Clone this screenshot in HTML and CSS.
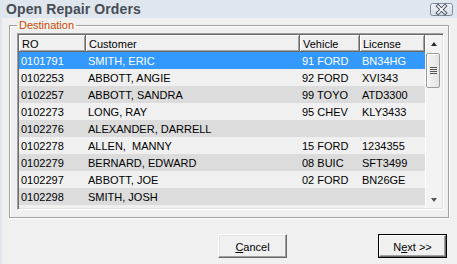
FILE: index.html
```html
<!DOCTYPE html>
<html>
<head>
<meta charset="utf-8">
<title>Open Repair Orders</title>
<link rel="stylesheet" href="styles.css">
</head>
<body>
<div class="window">
  <div class="titlebar">
    <span class="title">Open Repair Orders</span>
    <span class="close">
      <svg width="23" height="13" viewBox="0 0 23 13">
        <defs>
          <linearGradient id="cg" x1="0" y1="0" x2="0" y2="1">
            <stop offset="0" stop-color="#f1f4f8"/>
            <stop offset="1" stop-color="#d6dee8"/>
          </linearGradient>
        </defs>
        <rect x="0.5" y="0.5" width="22" height="12" rx="2" ry="2" fill="url(#cg)" stroke="#7f8a98"/>
        <path d="M8 3 L15 10 M15 3 L8 10" stroke="#4a5462" stroke-width="3.6" stroke-linecap="square"/>
        <path d="M8 3 L15 10 M15 3 L8 10" stroke="#ffffff" stroke-width="1.6" stroke-linecap="square"/>
      </svg>
    </span>
  </div>
  <div class="main">
    <fieldset class="group">
      <legend class="legend">Destination</legend>
      <div class="listview">
        <div class="table">
          <div class="hdr">
            <div class="th">RO</div>
            <div class="th">Customer</div>
            <div class="th">Vehicle</div>
            <div class="th">License</div>
          </div>
          <div class="row sel"><span>0101791</span><span>SMITH, ERIC</span><span>91 FORD</span><span>BN34HG</span></div>
          <div class="row light"><span>0102253</span><span>ABBOTT, ANGIE</span><span>92 FORD</span><span>XVI343</span></div>
          <div class="row dark"><span>0102257</span><span>ABBOTT, SANDRA</span><span>99 TOYO</span><span>ATD3300</span></div>
          <div class="row light"><span>0102273</span><span>LONG, RAY</span><span>95 CHEV</span><span>KLY3433</span></div>
          <div class="row dark"><span>0102276</span><span>ALEXANDER, DARRELL</span><span></span><span></span></div>
          <div class="row light"><span>0102278</span><span>ALLEN,  MANNY</span><span>15 FORD</span><span>1234355</span></div>
          <div class="row dark"><span>0102279</span><span>BERNARD, EDWARD</span><span>08 BUIC</span><span>SFT3499</span></div>
          <div class="row light"><span>0102297</span><span>ABBOTT, JOE</span><span>02 FORD</span><span>BN26GE</span></div>
          <div class="row dark"><span>0102298</span><span>SMITH, JOSH</span><span></span><span></span></div>
        </div>
        <div class="scrollbar">
          <div class="sbtn"><span class="arrow-up"></span></div>
          <div class="track">
            <div class="thumb"><span class="grip"></span></div>
          </div>
          <div class="sbtn"><span class="arrow-down"></span></div>
        </div>
      </div>
    </fieldset>
    <div class="buttons">
      <div class="btn"><u>C</u>ancel</div>
      <div class="btn default"><span class="inner">N<u>e</u>xt &gt;&gt;</span></div>
    </div>
  </div>
</div>
</body>
</html>
```
FILE: styles.css
```css
html, body {
  margin: 0;
  padding: 0;
}
body {
  width: 457px;
  height: 264px;
  overflow: hidden;
  background: #f0f0f0;
  font-family: "Liberation Sans", Arial, sans-serif;
  font-size: 11px;
  color: #000;
}
.window {
  width: 457px;
  height: 264px;
  display: flex;
  flex-direction: column;
  background: #f0f0f0;
}
.titlebar {
  height: 18px;
  flex: none;
  display: flex;
  justify-content: space-between;
  align-items: flex-start;
  background: #dfe6ee;
  padding-left: 6px;
  padding-right: 4px;
}
.title {
  font-weight: bold;
  font-size: 14px;
  line-height: 18px;
  color: #474e56;
  letter-spacing: 0.1px;
}
.close {
  display: block;
  width: 23px;
  height: 13px;
  margin-top: 3px;
}
.close svg {
  display: block;
}
.main {
  flex: 1;
  display: flex;
  flex-direction: column;
  border-left: 2px solid #dfe6ee;
}
.group {
  margin: 1px 0 0 7px;
  width: 440px;
  box-sizing: border-box;
  padding: 1px 4px 7px 7px;
  border: 1px solid #a0a0a0;
  box-shadow: inset 1px 1px 0 #fff, 1px 1px 0 #fff;
  min-width: 0;
}
.legend {
  padding: 0 2px;
  margin: 0;
  line-height: 13px;
  color: #c84a00;
  font-size: 11px;
}
.listview {
  width: 427px;
  height: 177px;
  box-sizing: border-box;
  border-style: solid;
  border-width: 1px;
  border-color: #a0a0a0 #fff #fff #a0a0a0;
  box-shadow: inset 1px 1px 0 #696969, inset -1px -1px 0 #e3e3e3;
  padding: 1px;
  display: flex;
  overflow: hidden;
  background: #f0f0f0;
}
.table {
  width: 406px;
  flex: none;
  overflow: hidden;
}
.hdr, .row {
  display: grid;
  grid-template-columns: 67px 214px 60px 65px;
  height: 17px;
}
.th {
  box-sizing: border-box;
  background: #f0f0f0;
  border-right: 1px solid #696969;
  border-bottom: 1px solid #696969;
  box-shadow: inset 1px 1px 0 #fff, inset -1px -1px 0 #a0a0a0;
  padding: 4px 0 0 3px;
  line-height: 11px;
  white-space: pre;
}
.row span {
  padding: 3px 0 0 2px;
  line-height: 12px;
  white-space: pre;
  overflow: hidden;
}
.row.sel {
  background: #3399ff;
  color: #fff;
}
.row.light {
  background: #f0f0f0;
}
.row.dark {
  background: #dcdcdc;
}
.scrollbar {
  width: 17px;
  flex: none;
  display: flex;
  flex-direction: column;
  background: #f3f3f3;
  box-shadow: inset 1px 0 0 #fff;
}
.sbtn {
  height: 17px;
  flex: none;
  display: flex;
  align-items: center;
  justify-content: center;
}
.arrow-up {
  width: 0;
  height: 0;
  border-left: 3.5px solid transparent;
  border-right: 3.5px solid transparent;
  border-bottom: 4px solid #2a2a2a;
  margin-left: 1px;
}
.arrow-down {
  width: 0;
  height: 0;
  border-left: 3.5px solid transparent;
  border-right: 3.5px solid transparent;
  border-top: 4px solid #555;
  margin-left: 1px;
}
.track {
  flex: 1;
  padding-top: 1px;
}
.thumb {
  margin-left: 1px;
  width: 14px;
  height: 35px;
  box-sizing: border-box;
  border: 1px solid #9b9b9b;
  border-radius: 2px;
  background: linear-gradient(to right, #f4f4f4, #e4e4e4);
  box-shadow: inset 1px 1px 0 #fff;
  display: flex;
  align-items: center;
  justify-content: center;
}
.grip {
  display: block;
  width: 7px;
  height: 7px;
  background: repeating-linear-gradient(to bottom, #555 0, #555 1px, transparent 1px, transparent 2px);
}
.buttons {
  display: flex;
  justify-content: flex-end;
  gap: 91px;
  padding-right: 10px;
  margin-top: 16px;
}
.btn {
  width: 69px;
  height: 24px;
  box-sizing: border-box;
  display: flex;
  align-items: center;
  justify-content: center;
  background: #f0f0f0;
  border-style: solid;
  border-width: 1px;
  border-color: #fff #696969 #696969 #fff;
  box-shadow: inset -1px -1px 0 #a0a0a0, inset 1px 1px 0 #e3e3e3;
  line-height: 12px;
  padding-top: 1px;
}
.btn.default {
  border: 1px solid #000;
  box-shadow: none;
  padding: 0;
  align-items: stretch;
}
.btn.default .inner {
  flex: 1;
  display: flex;
  align-items: center;
  justify-content: center;
  border-style: solid;
  border-width: 1px;
  border-color: #fff #696969 #696969 #fff;
  box-shadow: inset -1px -1px 0 #a0a0a0;
  padding-top: 1px;
}
u {
  text-decoration: underline;
  text-underline-offset: 1px;
}
```
